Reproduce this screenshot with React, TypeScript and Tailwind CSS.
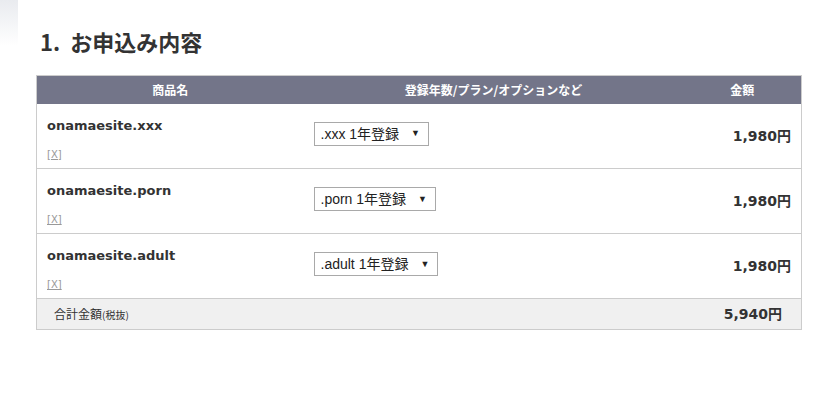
import React from "react";

const ITEMS = [
  { name: "onamaesite.xxx", plan: ".xxx 1年登録", price: "1,980円" },
  { name: "onamaesite.porn", plan: ".porn 1年登録", price: "1,980円" },
  { name: "onamaesite.adult", plan: ".adult 1年登録", price: "1,980円" },
];

const latin = "font-['DejaVu_Sans','Noto_Sans_CJK_JP',sans-serif]";
const jp = "font-['Noto_Sans_CJK_JP','DejaVu_Sans',sans-serif]";

function PlanSelect({ label }: { label: string }) {
  return (
    <div className="inline-flex h-[24px] items-center border border-[#a9a9a9] bg-white pl-[6px] pr-[8px] font-['Liberation_Sans','Noto_Sans_CJK_JP',sans-serif] text-[14px] text-[#222]">
      <span className="leading-none">{label}</span>
      <span className="ml-[12px] text-[9px] leading-none">▼</span>
    </div>
  );
}

export default function App() {
  return (
    <div className="relative h-[412px] w-[821px] bg-white">
      <div className="absolute left-0 top-0 h-[46px] w-[18px] bg-gradient-to-b from-[#e9ebef] to-white" />
      <div className="pl-[36px] pr-[19px] pt-[26px]">
        <h1 className={`${jp} pl-[4px] text-[22px] font-bold leading-[30px] text-[#333]`}>
          1.<span className="ml-[10px]">お申込み内容</span>
        </h1>
        <table className="mt-[19px] w-full border-collapse border border-[#cccccc]">
          <thead>
            <tr className={`${jp} h-[28px] bg-[#737589] text-[12px] font-bold text-white`}>
              <th className="w-[267px] font-bold">商品名</th>
              <th className="w-[380px] font-bold">登録年数/プラン/オプションなど</th>
              <th className="font-bold">金額</th>
            </tr>
          </thead>
          <tbody>
            {ITEMS.map((item) => (
              <tr key={item.name} className="h-[65px] border-b border-[#cccccc] align-middle">
                <td className="px-[10px] align-top pt-[13px]">
                  <div className={`${latin} text-[13px] font-bold leading-[18px] text-[#333]`}>{item.name}</div>
                  <a className={`${latin} mt-[13px] block text-[10px] leading-[14px] text-[#999] underline`}>[X]</a>
                </td>
                <td className="px-[10px] pb-[5px]">
                  <PlanSelect label={item.plan} />
                </td>
                <td className={`${latin} pr-[10px] pt-[1px] text-right text-[14px] font-bold text-[#333]`}>{item.price}</td>
              </tr>
            ))}
            <tr className="h-[31px] bg-[#f0f0f0]">
              <td colSpan={2} className={`${jp} pl-[17px] text-[12px] text-[#333]`}>
                合計金額<span className="text-[10px]">(税抜)</span>
              </td>
              <td className={`${latin} pr-[19px] text-right text-[14px] font-bold text-[#333]`}>5,940円</td>
            </tr>
          </tbody>
        </table>
      </div>
    </div>
  );
}
